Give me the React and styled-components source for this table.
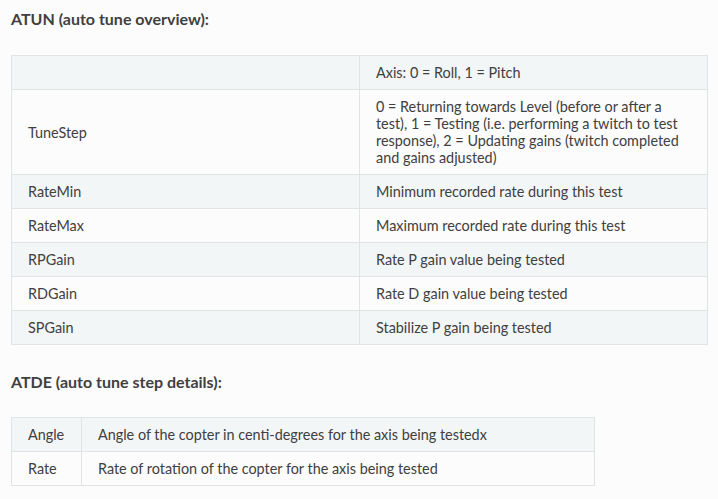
import React from "react";
import styled, { createGlobalStyle } from "styled-components";

const GlobalStyle = createGlobalStyle`
  html, body {
    margin: 0;
    background: #fcfcfc;
  }
  body {
    font-family: Lato, "Noto Sans", "Liberation Sans", sans-serif;
    color: #404040;
  }
`;

const Page = styled.div`
  padding: 0 11px;
  display: flex;
  flex-direction: column;
  align-items: flex-start;
`;

const Heading = styled.h4`
  margin: ${(p) => (p.first ? "7px 0 24px" : "25px 0 23px")};
  font-size: 16px;
  line-height: 24px;
  font-weight: 700;
  color: #404040;
`;

const Table = styled.table`
  width: ${(p) => p.width};
  border-collapse: collapse;
  table-layout: fixed;
  border: 1px solid #e1e4e5;
  font-size: 14.4px;
  line-height: 17px;
  tbody tr:nth-child(odd) td {
    background: #f3f6f6;
  }
  tbody tr:nth-child(even) td {
    background: #fcfcfc;
  }
`;

const Cell = styled.td`
  padding: 8px 16px;
  border: 1px solid #e1e4e5;
  vertical-align: middle;
  text-align: left;
`;

const atun = [
  ["", "Axis: 0 = Roll, 1 = Pitch"],
  [
    "TuneStep",
    "0 = Returning towards Level (before or after a test), 1 = Testing (i.e. performing a twitch to test response), 2 = Updating gains (twitch completed and gains adjusted)",
  ],
  ["RateMin", "Minimum recorded rate during this test"],
  ["RateMax", "Maximum recorded rate during this test"],
  ["RPGain", "Rate P gain value being tested"],
  ["RDGain", "Rate D gain value being tested"],
  ["SPGain", "Stabilize P gain being tested"],
];

const atde = [
  ["Angle", "Angle of the copter in centi-degrees for the axis being testedx"],
  ["Rate", "Rate of rotation of the copter for the axis being tested"],
];

function FieldTable({ rows, width, firstCol }) {
  return (
    <Table width={width}>
      <colgroup>
        <col style={{ width: firstCol }} />
        <col />
      </colgroup>
      <tbody>
        {rows.map(([name, desc], i) => (
          <tr key={i}>
            <Cell>{name}</Cell>
            <Cell>{desc}</Cell>
          </tr>
        ))}
      </tbody>
    </Table>
  );
}

export default function App() {
  return (
    <>
      <GlobalStyle />
      <Page>
        <Heading first>ATUN (auto tune overview):</Heading>
        <FieldTable rows={atun} width="697px" firstCol="348px" />
        <Heading>ATDE (auto tune step details):</Heading>
        <FieldTable rows={atde} width="584px" firstCol="70px" />
      </Page>
    </>
  );
}
